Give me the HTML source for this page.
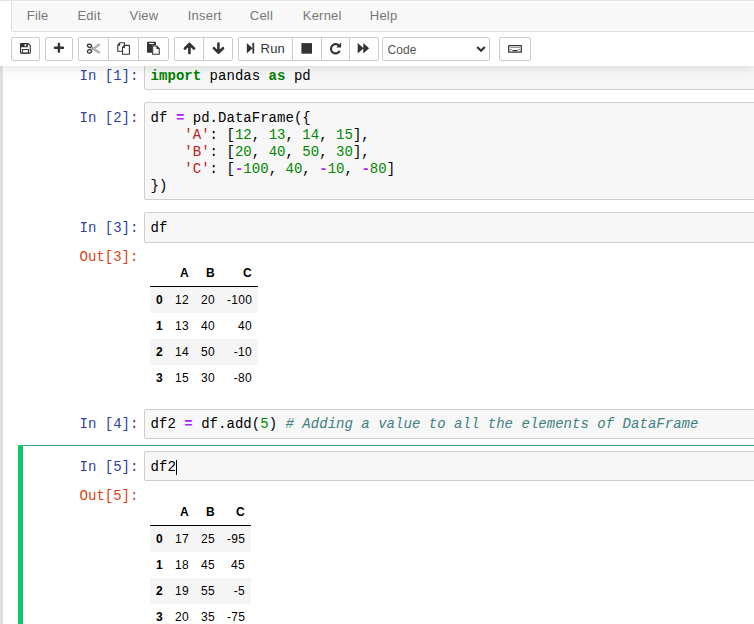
<!DOCTYPE html>
<html><head><meta charset="utf-8">
<style>
*{box-sizing:border-box;margin:0;padding:0}
html,body{width:754px;height:624px;overflow:hidden;background:#fff}
body{position:relative;font-family:"Liberation Sans",sans-serif}
.abs{position:absolute}
#strip{position:absolute;left:0;top:66px;width:3px;height:558px;background:#e0e0e0}
#header{position:absolute;left:0;top:0;width:754px;height:66px;background:#fff;z-index:10;box-shadow:0 0 12px 1px rgba(87,87,87,0.2)}
#menubar{position:absolute;left:11px;top:-6px;width:760px;height:38px;background:#f8f8f8;border:1px solid #dedede;border-radius:2px}
.mi{position:absolute;top:8px;font-size:13px;line-height:15px;color:#777;white-space:nowrap;letter-spacing:0.2px}
.btn{position:absolute;top:37px;height:24px;border:1px solid #ccc;background:#fff;border-radius:2px}
.sq{border-radius:0}
.l{border-top-right-radius:0;border-bottom-right-radius:0}
.r{border-top-left-radius:0;border-bottom-left-radius:0}
.m{border-radius:0}
.ia{position:absolute;left:144px;width:700px;border:1px solid #cfcfcf;border-radius:2px;background:#f7f7f7}
.code{position:absolute;left:150.6px;font-family:"Liberation Mono",monospace;font-size:14px;line-height:17px;white-space:pre;color:#000;letter-spacing:0.027px}
.pr{position:absolute;left:0;width:138.4px;text-align:right;font-family:"Liberation Mono",monospace;font-size:14px;line-height:17px;white-space:pre}
.ip{color:#303F9F}
.op{color:#D84315}
.kw{color:#008000;font-weight:bold}
.op2{color:#AA22FF;font-weight:bold}
.num{color:#008800}
.str{color:#BA2121}
.cm{color:#408080;font-style:italic}
table.df{position:absolute;left:150px;border-collapse:collapse;border-spacing:0;table-layout:fixed;font-size:12px;color:#000;font-family:"Liberation Sans",sans-serif}
table.df th,table.df td{text-align:right;vertical-align:middle;padding:6px;line-height:normal;border:none}
table.df th{font-weight:bold}
table.df thead{border-bottom:1px solid #000}
table.df tbody tr:nth-child(odd){background:#f5f5f5}
table.df th,table.df td{letter-spacing:0.33px}
.t1 th:nth-child(1){width:19px}.t1 th:nth-child(2),.t1 th:nth-child(3){width:26px}.t1 th:nth-child(4){width:37px}.t1{width:108px}
.t2 th:nth-child(1){width:19px}.t2 th:nth-child(2),.t2 th:nth-child(3){width:26px}.t2 th:nth-child(4){width:30px}.t2{width:101px}
</style></head><body>
<div id="strip"></div>

<!-- cell 1 -->
<div class="ia" style="top:60px;height:30.2px"></div>
<div class="pr ip" style="top:67.75px">In [1]:</div>
<div class="code" style="top:67.75px"><span class="kw">import</span> pandas <span class="kw">as</span> pd</div>

<!-- cell 2 -->
<div class="ia" style="top:102.2px;height:98.2px"></div>
<div class="pr ip" style="top:109.95px">In [2]:</div>
<div class="code" style="top:109.95px">df <span class="op2">=</span> pd.DataFrame({
    <span class="str">'A'</span>: [<span class="num">12</span>, <span class="num">13</span>, <span class="num">14</span>, <span class="num">15</span>],
    <span class="str">'B'</span>: [<span class="num">20</span>, <span class="num">40</span>, <span class="num">50</span>, <span class="num">30</span>],
    <span class="str">'C'</span>: [<span class="op2">-</span><span class="num">100</span>, <span class="num">40</span>, <span class="op2">-</span><span class="num">10</span>, <span class="op2">-</span><span class="num">80</span>]
})</div>

<!-- cell 3 -->
<div class="ia" style="top:212.4px;height:30.2px"></div>
<div class="pr ip" style="top:220.15px">In [3]:</div>
<div class="code" style="top:220.15px">df</div>
<div class="pr op" style="top:249.35px">Out[3]:</div>
<table class="df t1" style="top:260.2px">
<thead><tr><th></th><th>A</th><th>B</th><th>C</th></tr></thead>
<tbody>
<tr><th>0</th><td>12</td><td>20</td><td>-100</td></tr>
<tr><th>1</th><td>13</td><td>40</td><td>40</td></tr>
<tr><th>2</th><td>14</td><td>50</td><td>-10</td></tr>
<tr><th>3</th><td>15</td><td>30</td><td>-80</td></tr>
</tbody></table>

<!-- cell 4 -->
<div class="ia" style="top:409px;height:30.2px"></div>
<div class="pr ip" style="top:415.75px">In [4]:</div>
<div class="code" style="top:415.75px">df2 <span class="op2">=</span> df.add(<span class="num">5</span>) <span class="cm"># Adding a value to all the elements of DataFrame</span></div>

<!-- cell 5 (selected) -->
<div class="abs" style="left:18px;top:445px;width:800px;height:300px;border:1px solid #3e9f88;border-right:none"></div>
<div class="abs" style="left:18px;top:445px;width:5px;height:200px;background:#0cc86a"></div>
<div class="ia" style="top:451.2px;height:30.2px;background:#f7f7f7"></div>
<div class="pr ip" style="top:458.95px">In [5]:</div>
<div class="code" style="top:458.95px">df2</div>
<div class="abs" style="left:176px;top:460px;width:1px;height:15px;background:#000"></div>
<div class="pr op" style="top:488.15px">Out[5]:</div>
<table class="df t2" style="top:499px">
<thead><tr><th></th><th>A</th><th>B</th><th>C</th></tr></thead>
<tbody>
<tr><th>0</th><td>17</td><td>25</td><td>-95</td></tr>
<tr><th>1</th><td>18</td><td>45</td><td>45</td></tr>
<tr><th>2</th><td>19</td><td>55</td><td>-5</td></tr>
<tr><th>3</th><td>20</td><td>35</td><td>-75</td></tr>
</tbody></table>

<!-- header -->
<div id="header">
  <div id="menubar"></div>
  <div class="abs" style="left:0;top:0;width:754px;height:1px;background:#e4e4e4"></div>
  <div class="abs" style="left:0;top:1px;width:754px;height:2px;background:#fdfdfd"></div>
  <div class="abs" style="left:12px;top:3px;width:742px;height:1px;background:#fafafa"></div>
  <div class="abs" style="left:12px;top:29px;width:742px;height:2px;background:#fbfbfb"></div>
  <div class="abs" style="left:11px;top:0;width:1px;height:3px;background:#e3e3e3"></div>
  <div class="mi" style="left:26.8px">File</div>
  <div class="mi" style="left:77.5px">Edit</div>
  <div class="mi" style="left:129.6px">View</div>
  <div class="mi" style="left:187.8px">Insert</div>
  <div class="mi" style="left:249.8px">Cell</div>
  <div class="mi" style="left:302.8px">Kernel</div>
  <div class="mi" style="left:369.8px">Help</div>

  <div class="btn" style="left:11px;width:29px"></div>
  <div class="btn" style="left:45px;width:28px"></div>
  <div class="btn l" style="left:78px;width:31px"></div>
  <div class="btn m" style="left:108px;width:31px"></div>
  <div class="btn r" style="left:138px;width:31px"></div>
  <div class="btn l" style="left:174px;width:30px"></div>
  <div class="btn r" style="left:203px;width:30px"></div>
  <div class="btn l" style="left:238px;width:55px"></div>
  <div class="btn m" style="left:292px;width:30px"></div>
  <div class="btn m" style="left:321px;width:29px"></div>
  <div class="btn r" style="left:349px;width:30px"></div>
  <div class="btn" style="left:382px;width:108px"></div>
  <div class="btn" style="left:499px;width:32px"></div>
  <svg class="abs" style="left:0;top:0" width="754" height="66" viewBox="0 0 754 66">
    <g fill="#333" stroke="none">
      <!-- save -->
      <path d="M20.5,44 Q20.5,43.5 21,43.5 H28.2 L30.3,45.6 V52.8 Q30.3,53.3 29.8,53.3 H21 Q20.5,53.3 20.5,52.8 Z" fill="none" stroke="#333" stroke-width="1.1"/>
      <path d="M21,43.5 H27.9 V47.3 H21 Z M24.6,44.3 V46.2 H26.2 V44.3 Z" fill-rule="evenodd"/>
      <rect x="22.3" y="49.6" width="6.2" height="3.4" fill="none" stroke="#333" stroke-width="1.05"/>
      <!-- plus -->
      <rect x="53.8" y="46.6" width="10.3" height="2.5" rx="1"/>
      <rect x="57.7" y="42.8" width="2.4" height="9.9" rx="1"/>
      <!-- stop -->
      <rect x="301.4" y="43.1" width="10.6" height="10.6"/>
      <!-- step forward -->
      <path d="M246.8,42.9 L252.6,48.2 L246.8,53.5 Z"/>
      <rect x="252.4" y="42.9" width="1.8" height="10.6"/>
      <!-- fast forward -->
      <path d="M357.7,42.9 L363.6,48.2 L357.7,53.5 Z M363.3,42.9 L369.1,48.2 L363.3,53.5 Z"/>
    </g>
    <g fill="none" stroke="#333">
      <!-- scissors -->
      <ellipse cx="89.5" cy="45.8" rx="2.1" ry="1.6" stroke-width="1.3" transform="rotate(20 89.5 45.8)"/>
      <ellipse cx="89.5" cy="51.4" rx="2.1" ry="1.6" stroke-width="1.3" transform="rotate(-20 89.5 51.4)"/>
      <path d="M91.2,47.2 L99.6,52.9 M91.2,50.2 L99.6,44.4" stroke-width="1.9" stroke="#8a8a8a"/>
      <path d="M92.6,48.2 L99.2,52.6 M92.6,49.2 L99.2,44.7" stroke-width="0.6" stroke="#eee"/>
      <!-- copy -->
      <path d="M119.6,42.8 H124.4 V45.2 M122.4,51.3 H117.8 V45.2 L119.6,43.2 V45.2 H117.8" stroke-width="1.1" stroke-linejoin="round"/>
      <path d="M124.3,45.4 H129.4 V54.2 H122.5 V47.4 Z M122.5,47.4 H124.3 V45.4" stroke-width="1.1" stroke-linejoin="round"/>
      <!-- up arrow -->
      <path d="M184.9,48.5 L189.4,44 L194,48.5 M189.4,44.6 V53.1" stroke-width="2.6" stroke-linecap="round" stroke-linejoin="round"/>
      <!-- down arrow -->
      <path d="M213.9,48.2 L218.4,52.7 L223,48.2 M218.4,52.1 V43.6" stroke-width="2.6" stroke-linecap="round" stroke-linejoin="round"/>
      <!-- restart -->
      <path d="M339.1,45.8 A4.6,4.6 0 1 0 339.7,50.8" stroke-width="2.1"/>
      <!-- chevron -->
      <path d="M477.2,47 L481,50.8 L484.8,47" stroke="#333" stroke-width="2.2"/>
      <!-- keyboard -->
      <rect x="508.7" y="45.6" width="12.6" height="6.6" stroke-width="1.25" rx="0.3"/>
    </g>
    <g fill="#333">
      <path d="M341.1,42.5 V47.4 H336.2 Z"/>
      <!-- paste -->
      <path d="M147,42.6 Q147,41.8 147.8,41.8 H155.2 Q156,41.8 156,42.6 V45.4 H152 V52.7 H147.8 Q147,52.7 147,51.9 Z M149.2,43 V44.1 H153.9 V43 Z" fill-rule="evenodd"/>
      <path d="M152.1,45.5 H157 L159.8,48.3 V54.8 H152.1 Z M153.2,46.6 V53.7 H158.7 V48.9 H156.4 V46.6 Z" fill-rule="evenodd"/>
      <!-- keyboard keys -->
      <rect x="510.2" y="49.1" width="1.2" height="1.0"/>
      <rect x="512.4" y="50" width="5.3" height="1.2"/>
      <rect x="518.6" y="49.1" width="1.2" height="1.0"/>
      <rect x="510.2" y="47" width="9.6" height="1.0" fill="#999"/>
    </g>
  </svg>
  <div class="abs" style="left:260.6px;top:41px;font-size:13px;line-height:15px;color:#333;letter-spacing:0.15px">Run</div>
  <div class="abs" style="left:387.4px;top:43.2px;font-size:12px;line-height:15px;color:#555;letter-spacing:0.1px">Code</div>
</div>
</body></html>
